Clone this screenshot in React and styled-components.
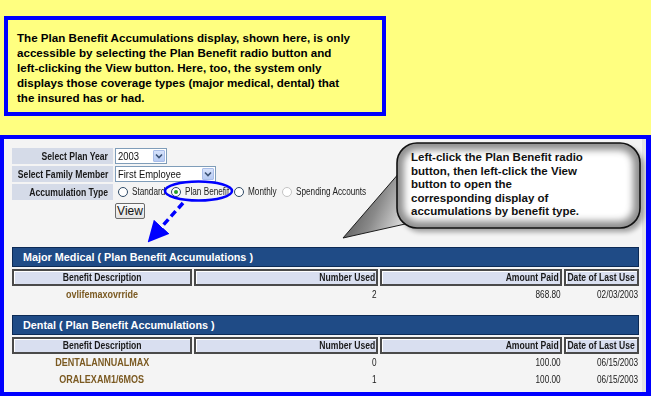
import React from "react";
import styled, { createGlobalStyle } from "styled-components";

const SANS = `"Liberation Sans", Arial, sans-serif`;

const GlobalStyle = createGlobalStyle`
  html, body {
    margin: 0;
    padding: 0;
    background: #ffff80;
  }
  body {
    font-family: ${SANS};
  }
`;

// the app's text is set in a condensed face; no narrow face is installed, so squeeze the sans
const Narrow = styled.span`
  display: inline-block;
  white-space: nowrap;
  transform: scaleX(0.82);
  transform-origin: ${(p) => p.$origin || "center"};
`;

const Page = styled.div`
  position: relative;
  width: 651px;
  height: 396px;
  display: flex;
  flex-direction: column;
  overflow: hidden;
  background: #ffff80;
`;

const Note = styled.div`
  box-sizing: border-box;
  width: 382px;
  height: 100px;
  margin: 16px 0 0 4px;
  border: 4px solid #0000ff;
  padding: 10px 0 0 9px;
  font: bold 11.6px/15px ${SANS};
  color: #000;
`;

const Panel = styled.div`
  flex: 1;
  min-height: 0;
  margin-top: 19px;
  border: 4px solid #0000ff;
  border-right-width: 5px;
  background: #f4f4f4;
  box-shadow: inset -4px 0 0 #e4e4e4;
  padding: 9px 7px 0 8px;
`;

const Form = styled.div`
  display: grid;
  grid-template-columns: 101px auto;
  grid-auto-rows: 16px;
  row-gap: 2px;
  column-gap: 2px;
  justify-content: start;
`;

const Label = styled.div`
  display: flex;
  align-items: center;
  justify-content: flex-end;
  background: #d5dbe8;
  font: bold 10.5px/16px ${SANS};
  color: #1a1a1a;
  padding-right: 5px;
  white-space: nowrap;
`;

const Control = styled.div`
  grid-column: 2;
  display: flex;
  align-items: center;
`;

const Select = styled.div`
  box-sizing: border-box;
  width: ${(p) => p.$w}px;
  height: 16px;
  display: flex;
  align-items: center;
  justify-content: space-between;
  background: #fff;
  border: 1px solid #7f9db9;
  padding: 0 1px 0 2px;
  font: 11.5px/14px ${SANS};
  color: #111;
`;

const SelectButton = styled.span`
  box-sizing: border-box;
  width: 12px;
  height: 12px;
  display: flex;
  align-items: center;
  justify-content: center;
  background: linear-gradient(#d6e2fb, #b7cbf3);
  border: 1px solid #a9bde8;
  border-radius: 1px;
`;

const Radios = styled.div`
  display: flex;
  align-items: center;
  gap: 5px;
  margin-left: 3px;
`;

const RadioItem = styled.label`
  display: flex;
  align-items: center;
  gap: 4px;
  font: 10px/14px ${SANS};
  color: #222;
`;

const RadioText = styled.span`
  width: ${(p) => p.$w}px;
  white-space: nowrap;
`;

const Radio = styled.span`
  box-sizing: border-box;
  width: 10px;
  height: 10px;
  border-radius: 50%;
  border: 1px solid ${(p) => (p.$disabled ? "#c4c4c4" : "#2f4a66")};
  background: #fff;
  display: flex;
  align-items: center;
  justify-content: center;

  &::after {
    content: "";
    width: 4px;
    height: 4px;
    border-radius: 50%;
    background: #28a028;
    display: ${(p) => (p.$checked ? "block" : "none")};
  }
`;

const ViewButton = styled.div`
  box-sizing: border-box;
  width: 30px;
  height: 16px;
  margin-top: 1px;
  border: 1px solid #6b6b6b;
  border-radius: 2px;
  background: linear-gradient(#fafafa, #e2e2e2);
  font: 12px/14px ${SANS};
  color: #111;
  text-align: center;
`;

const Section = styled.div`
  margin-top: ${(p) => p.$mt}px;
`;

const Bar = styled.div`
  box-sizing: border-box;
  height: 20px;
  background: #1f4b86;
  border: 1px solid #0c2a55;
  color: #fff;
  font: bold 10.8px/18px ${SANS};
  padding-left: 10px;
`;

const Grid = styled.div`
  display: grid;
  grid-template-columns: 180px 184px 182px minmax(0, 1fr);
  column-gap: 2px;
  margin-top: 2px;
`;

const HeadCell = styled.div`
  box-sizing: border-box;
  height: 17px;
  display: flex;
  align-items: center;
  justify-content: ${(p) => (p.$align === "center" ? "center" : "flex-end")};
  background: #d9dff0;
  border: 2px solid #4a4a4a;
  box-shadow: inset 1px 1px 0 #fff;
  font: bold 10.5px/13px ${SANS};
  color: #1a1a1a;
  padding: 0 1px;
  white-space: nowrap;
`;

const Cell = styled.div`
  height: 17px;
  display: flex;
  align-items: center;
  justify-content: ${(p) => (p.$desc ? "center" : "flex-end")};
  font: ${(p) => (p.$desc ? `bold 11px/17px ${SANS}` : `10px/17px ${SANS}`)};
  color: ${(p) => (p.$desc ? "#7b5a22" : "#1a1a1a")};
  padding-right: ${(p) => (p.$desc ? 0 : 1)}px;
  white-space: nowrap;
`;

const Overlay = styled.svg`
  position: absolute;
  left: 0;
  top: 0;
  pointer-events: none;
`;

const CalloutText = styled.div`
  position: absolute;
  left: 411px;
  top: 151px;
  font: bold 11.5px/13.5px ${SANS};
  color: #111;
  white-space: nowrap;
`;

const Chevron = () => (
  <svg width="8" height="6" viewBox="0 0 8 6">
    <path d="M1 1.5 L4 4.5 L7 1.5" fill="none" stroke="#3c5275" strokeWidth="1.6" />
  </svg>
);

const sections = [
  {
    title: "Major Medical ( Plan Benefit Accumulations )",
    mt: 29,
    rows: [["ovlifemaxovrride", "2", "868.80", "02/03/2003"]],
  },
  {
    title: "Dental ( Plan Benefit Accumulations )",
    mt: 12,
    rows: [
      ["DENTALANNUALMAX", "0", "100.00", "06/15/2003"],
      ["ORALEXAM1/6MOS", "1", "100.00", "06/15/2003"],
    ],
  },
];

const radios = [
  { label: "Standard", w: 34 },
  { label: "Plan Benefit", w: 44 },
  { label: "Monthly", w: 29 },
  { label: "Spending Accounts", w: 71, disabled: true },
];

const Callouts = () => (
  <Overlay width="651" height="396" viewBox="0 0 651 396">
    <defs>
      <linearGradient id="tailGrad" x1="0" y1="0" x2="1" y2="0.4">
        <stop offset="0" stopColor="#3a3a3a" />
        <stop offset="0.6" stopColor="#8a8a8a" />
        <stop offset="1" stopColor="#dcdcdc" />
      </linearGradient>
      <filter id="soft" x="-10%" y="-20%" width="120%" height="140%">
        <feGaussianBlur stdDeviation="3.5" />
      </filter>
      <filter id="shadow" x="-10%" y="-20%" width="130%" height="150%">
        <feGaussianBlur stdDeviation="2.5" />
      </filter>
      <clipPath id="bubbleClip">
        <rect x="397" y="143" width="243" height="85" rx="20" />
      </clipPath>
      <marker id="head" markerWidth="6" markerHeight="6" refX="2" refY="3" orient="auto" markerUnits="strokeWidth">
        <path d="M0 0 L6 3 L0 6 Z" fill="#0000ff" />
      </marker>
    </defs>

    <ellipse cx="198.5" cy="191" rx="33.5" ry="9.5" fill="none" stroke="#0000ff" strokeWidth="2.5" />
    <line
      x1="183"
      y1="203"
      x2="157"
      y2="232"
      stroke="#0000ff"
      strokeWidth="3.5"
      strokeDasharray="7 4"
      markerEnd="url(#head)"
    />

    <rect x="401" y="147" width="243" height="85" rx="20" fill="#000" opacity="0.35" filter="url(#shadow)" />
    <polygon points="400,172 343,238 414,222" fill="url(#tailGrad)" stroke="#1c1c1c" strokeWidth="1" />
    <rect x="397" y="143" width="243" height="85" rx="20" fill="#8f8f8f" />
    <g clipPath="url(#bubbleClip)">
      <rect x="404" y="150" width="229" height="71" rx="14" fill="#fff" filter="url(#soft)" />
    </g>
    <rect x="397" y="143" width="243" height="85" rx="20" fill="none" stroke="#111" strokeWidth="1.6" />
  </Overlay>
);

export default function App() {
  return (
    <Page>
      <GlobalStyle />
      <Note>
        The Plan Benefit Accumulations display, shown here, is only
        <br />
        accessible by selecting the Plan Benefit radio button and
        <br />
        left-clicking the View button. Here, too, the system only
        <br />
        displays those coverage types (major medical, dental) that
        <br />
        the insured has or had.
      </Note>

      <Panel>
        <Form>
          <Label>
            <Narrow $origin="right">Select Plan Year</Narrow>
          </Label>
          <Control>
            <Select $w={52}>
              <Narrow $origin="left">2003</Narrow>
              <SelectButton>
                <Chevron />
              </SelectButton>
            </Select>
          </Control>
          <Label>
            <Narrow $origin="right">Select Family Member</Narrow>
          </Label>
          <Control>
            <Select $w={101}>
              <Narrow $origin="left">First Employee</Narrow>
              <SelectButton>
                <Chevron />
              </SelectButton>
            </Select>
          </Control>
          <Label>
            <Narrow $origin="right">Accumulation Type</Narrow>
          </Label>
          <Control>
            <Radios>
              {radios.map((r) => (
                <RadioItem key={r.label}>
                  <Radio $checked={r.label === "Plan Benefit"} $disabled={r.disabled} />
                  <RadioText $w={r.w}>
                    <Narrow $origin="left">{r.label}</Narrow>
                  </RadioText>
                </RadioItem>
              ))}
            </Radios>
          </Control>
          <Control>
            <ViewButton>View</ViewButton>
          </Control>
        </Form>

        {sections.map((s) => (
          <Section key={s.title} $mt={s.mt}>
            <Bar>{s.title}</Bar>
            <Grid>
              <HeadCell $align="center">
                <Narrow>Benefit Description</Narrow>
              </HeadCell>
              <HeadCell>
                <Narrow $origin="right">Number Used</Narrow>
              </HeadCell>
              <HeadCell>
                <Narrow $origin="right">Amount Paid</Narrow>
              </HeadCell>
              <HeadCell $align="center">
                <Narrow>Date of Last Use</Narrow>
              </HeadCell>
              {s.rows.map((row) => (
                <React.Fragment key={row[0]}>
                  <Cell $desc>
                    <Narrow>{row[0]}</Narrow>
                  </Cell>
                  <Cell>
                    <Narrow $origin="right">{row[1]}</Narrow>
                  </Cell>
                  <Cell>
                    <Narrow $origin="right">{row[2]}</Narrow>
                  </Cell>
                  <Cell>
                    <Narrow $origin="right">{row[3]}</Narrow>
                  </Cell>
                </React.Fragment>
              ))}
            </Grid>
          </Section>
        ))}
      </Panel>

      <Callouts />
      <CalloutText>
        Left-click the Plan Benefit radio
        <br />
        button, then left-click the View
        <br />
        button to open the
        <br />
        corresponding display of
        <br />
        accumulations by benefit type.
      </CalloutText>
    </Page>
  );
}
